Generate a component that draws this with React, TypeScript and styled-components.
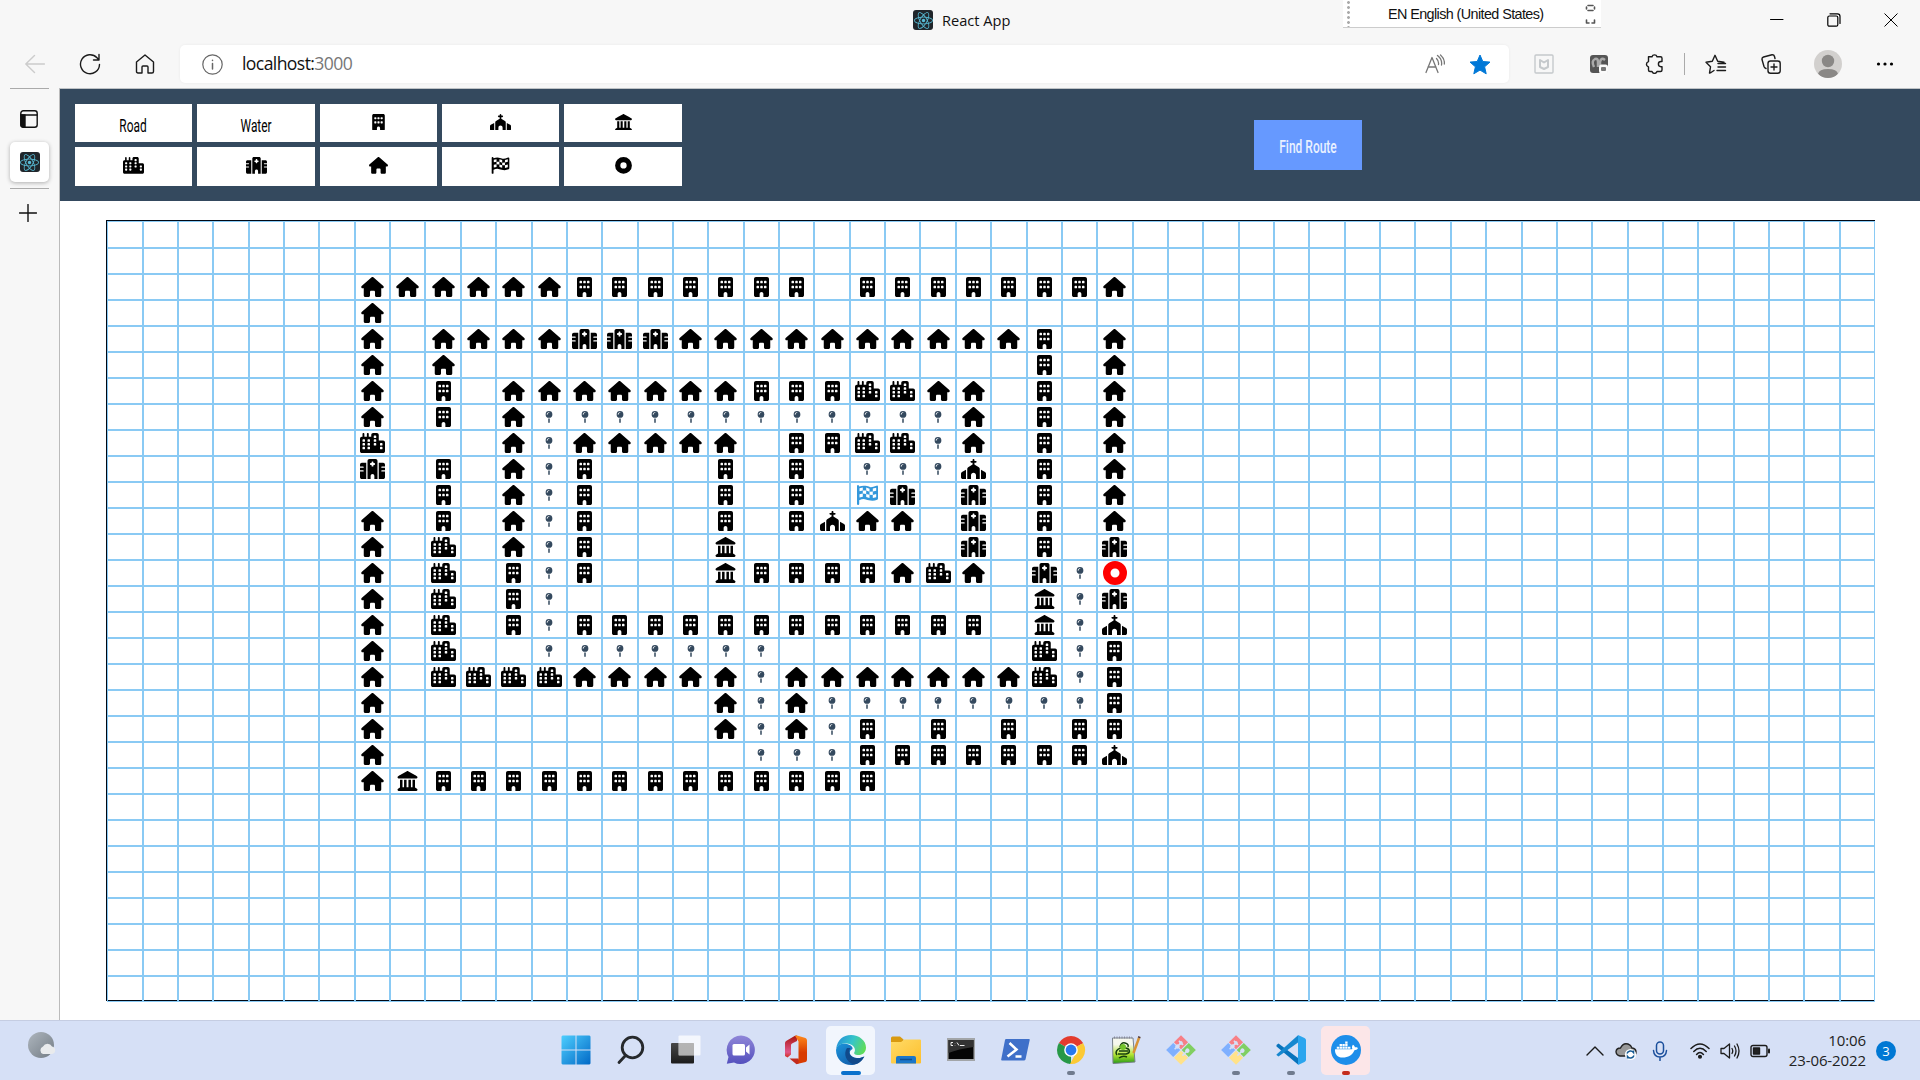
import React from "react";
import styled, { createGlobalStyle } from "styled-components";
import {
  FaBuilding, FaChurch, FaLandmark, FaCity, FaHospital, FaHouse,
  FaCircleDot, FaMapPin, FaReact, FaDocker,
} from "react-icons/fa6";

const Global = createGlobalStyle`
  * { box-sizing: border-box; }
  html, body { margin: 0; padding: 0; }
  body { background: #fff; font-family: "Open Sans", "Noto Sans", sans-serif; color: #1a1a1a; overflow: hidden; }
  svg { display: block; }
`;

const Screen = styled.div`
  width: 1920px;
  height: 1080px;
  display: flex;
  flex-direction: column;
  background: #f7f7f7;
`;

/* ---------- window chrome ---------- */
const TitleBar = styled.div`
  height: 45px;
  flex: none;
  display: flex;
  align-items: flex-start;
`;
const TabTitle = styled.div`
  margin-left: 913px;
  width: 430px;
  height: 40px;
  display: flex;
  align-items: center;
  gap: 9px;
  font-size: 14.6px;
  color: #111;
  white-space: nowrap;
`;
const LanguageBar = styled.div`
  width: 258px;
  height: 28px;
  background: #fff;
  border-bottom: 1px solid #ccc;
  display: flex;
  align-items: center;
  padding-left: 4px;
`;
const Grip = styled.div`
  width: 3px;
  height: 27px;
  background: radial-gradient(circle, #aaa 1.2px, transparent 1.6px) 0 0 / 3px 5px;
`;
const LanguageText = styled.div`
  margin-left: 38px;
  width: 185px;
  padding-top: 1px;
  font: 14.4px "Liberation Sans", Arial, sans-serif;
  letter-spacing: -0.6px;
  color: #111;
  white-space: nowrap;
`;
const WindowControls = styled.div`
  margin-left: 147px;
  height: 39px;
  display: flex;
  align-items: center;
`;
const ControlSlot = styled.div`
  width: 57px;
  display: flex;
  justify-content: center;
`;
const Favicon = styled.div`
  width: 20px;
  height: 20px;
  border-radius: 3px;
  background: #20262b;
  color: #58bcd6;
  display: flex;
  align-items: center;
  justify-content: center;
  font-size: 19px;
`;

const Toolbar = styled.div`
  height: 43px;
  flex: none;
  display: flex;
  align-items: flex-start;
`;
const NavSlots = styled.div`
  width: 180px;
  height: 38px;
  padding-left: 7px;
  display: flex;
  align-items: center;
`;
const Slot = styled.div<{ $w: number }>`
  width: ${(p) => p.$w}px;
  flex: none;
  display: flex;
  justify-content: center;
  align-items: center;
`;
const Address = styled.div`
  width: 1329px;
  height: 38px;
  flex: none;
  border-radius: 5px;
  background: #fff;
  box-shadow: 0 0 3px rgba(0, 0, 0, 0.06);
  display: flex;
  align-items: center;
  padding: 0 8px 0 22px;
`;
const Url = styled.div`
  flex: 1;
  margin-left: 19px;
  margin-top: -2px;
  font-size: 17.6px;
  letter-spacing: -0.6px;
  color: #111;
  span { color: #777; }
`;
const Extensions = styled.div`
  height: 38px;
  flex: 1;
  padding-left: 7px;
  display: flex;
  align-items: center;
`;
const Separator = styled.div`
  width: 1px;
  height: 22px;
  background: #aaa;
`;
const Avatar = styled.div`
  width: 28px;
  height: 28px;
  border-radius: 50%;
  overflow: hidden;
  background: #d2d0ce;
`;

const Body = styled.div`
  height: 932px;
  flex: none;
  display: flex;
`;
const SideTabs = styled.div`
  width: 59px;
  display: flex;
  flex-direction: column;
  align-items: center;
`;
const SideLine = styled.div`
  width: 39px;
  height: 1px;
  flex: none;
  background: #aaa;
`;
const TabsToggle = styled.div`
  height: 53px;
  display: flex;
  align-items: center;
  margin-right: 1px;
  padding-top: 7px;
`;
const ActiveTab = styled.div`
  width: 39px;
  height: 40px;
  margin-bottom: 6px;
  border-radius: 5px;
  background: #fff;
  box-shadow: 0 1px 4px rgba(0, 0, 0, 0.3);
  display: flex;
  align-items: center;
  justify-content: center;
`;
const NewTab = styled.div`
  margin: 15px 3px 0 0;
`;

/* ---------- the page ---------- */
const Page = styled.main`
  flex: 1;
  border-left: 1px solid #bbb;
  border-top: 1px solid #bfc3c6;
  background: #fff;
`;
const Header = styled.header`
  height: 112px;
  background: #34495e;
  display: flex;
  align-items: center;
  padding-left: 15px;
`;
const Palette = styled.div`
  display: grid;
  grid-template: 38px 39px / 117px 118px 117px 117px 118px;
  gap: 5px;
`;
const PaletteItem = styled.button`
  border: 0;
  padding: 0 0 2px;
  background: #fff;
  color: #000;
  display: flex;
  align-items: center;
  justify-content: center;
  svg { width: 21px; height: 16.8px; }
`;
const Narrow = styled.span<{ $bold?: boolean }>`
  font-family: Roboto, "Liberation Sans", sans-serif;
  font-size: 19.2px;
  font-weight: ${(p) => (p.$bold ? 500 : 400)};
  white-space: nowrap;
  transform: ${(p) => (p.$bold ? "translateY(1px) scaleX(0.625)" : "translateY(3px) scaleX(0.62)")};
`;
const RouteButton = styled.button`
  margin-left: 572px;
  width: 108px;
  height: 50px;
  border: 0;
  padding: 0;
  background: #6699ff;
  color: #e9f1ff;
  display: flex;
  align-items: center;
  justify-content: center;
`;
const Board = styled.div`
  margin: 19px 0 0 46px;
  width: 1769px;
  height: 781px;
  border: 1px solid #000814;
`;
const Cells = styled.div`
  width: 1768.5px;
  height: 781px;
  margin-left: 0.2px;
  display: grid;
  grid-template: 27px repeat(29, 26px) / repeat(50, 35.37px);
`;
const iconSize = { normal: [25, 20], pin: [12, 12], ring: [24, 24] } as const;
const Cell = styled.div<{ $tone: string; $kind: keyof typeof iconSize }>`
  border: 1px solid #8acaf4;
  color: ${(p) => p.$tone};
  display: flex;
  align-items: center;
  justify-content: center;
  svg {
    flex: none;
    width: ${(p) => iconSize[p.$kind][0]}px;
    height: ${(p) => iconSize[p.$kind][1]}px;
  }
`;

/* ---------- taskbar ---------- */
const Taskbar = styled.footer`
  height: 60px;
  flex: none;
  background: #d6e0f6;
  border-top: 1px solid #c5cde2;
  display: flex;
  align-items: center;
`;
const Weather = styled.div`
  width: 548px;
  padding: 0 0 12px 27px;
`;
const Pinned = styled.div`
  width: 1030px;
  display: flex;
`;
const PinnedApp = styled.div<{ $bg?: string; $bar?: string; $wide?: boolean }>`
  width: 49px;
  height: 49px;
  margin: 0 3px;
  border-radius: 5px;
  background: ${(p) => p.$bg ?? "transparent"};
  display: flex;
  flex-direction: column;
  align-items: center;
  justify-content: space-between;
  padding-top: 9px;
  &::after {
    content: "";
    width: ${(p) => (p.$wide ? 20 : 8)}px;
    height: 4px;
    border-radius: 2px;
    background: ${(p) => p.$bar ?? "transparent"};
  }
`;
const Tray = styled.div`
  display: flex;
  align-items: center;
`;
const Clock = styled.div`
  width: 86px;
  margin-top: -2px;
  text-align: right;
  font-size: 15px;
  line-height: 20px;
  letter-spacing: -0.1px;
  color: #222;
`;
const Badge = styled.div`
  width: 20px;
  height: 20px;
  margin-left: 10px;
  border-radius: 50%;
  background: #0078d4;
  color: #fff;
  font-size: 13px;
  line-height: 20px;
  text-align: center;
`;

const MAP = [
  "", "",
  "HHHHHHBBBBBBB.BBBBBBBH",
  "H",
  "H.HHHHSSSHHHHHHHHHHB.H",
  "H.H................B.H",
  "H.B.HHHHHHHBBBCCHH.B.H",
  "H.B.HppppppppppppH.B.H",
  "C...HpHHHHH.BBCCpH.B.H",
  "S.B.HpB...B.B.ppph.B.H",
  "..B.HpB...B.B.FS.S.B.H",
  "H.B.HpB...B.BhHH.S.B.H",
  "H.C.HpB...L......S.B.S",
  "H.C.BpB...LBBBBHCH.SpO",
  "H.C.Bp.............LpS",
  "H.C.BpBBBBBBBBBBBB.Lph",
  "H.C..ppppppp.......CpB",
  "H.CCCCHHHHHpHHHHHHHCpB",
  "H.........HpHppppppppB",
  "H.........HpHpB.B.B.BB",
  "H..........pppBBBBBBBh",
  "HLBBBBBBBBBBBBB",
];
const FIRST_COLUMN = 7;

const CheckeredFlag = () => (
  <svg viewBox="0 0 21 20" fill="currentColor">
    <path d="M1 0Q2.200 0 2.200 1.500Q5.500 .3 8.500 .8T13 2T19.500 .7Q21 .2 21 1.800V13.500Q21 14.300 20.200 14.700Q17 16 13.500 15.500T8 14.300T2.200 15.200V19Q2.200 20 1.100 20Q0 20 0 19V1.200Q0 0 1 0Z" />
    <g fill="#fff">
      <path d="M2.500 3.200L5.800 2.600V5.600L2.500 6.200Z" />
      <path d="M9.200 2.600L12.500 3.700V6.700L9.200 5.600Z" />
      <path d="M15.800 3.600L19.200 2.700V5.700L15.800 6.600Z" />
      <path d="M5.800 5.600L9.200 5.600V8.900L5.800 8.600Z" />
      <path d="M12.500 6.700L15.800 6.600V9.900L12.500 9.700Z" />
      <path d="M2.500 9.200L5.800 8.600V11.800L2.500 12.600Z" />
      <path d="M9.200 8.900L12.500 9.700V12.900L9.200 12Z" />
      <path d="M15.800 9.900L19.200 9V12.200L15.800 13.100Z" />
    </g>
  </svg>
);

const ICONS: Record<string, React.ComponentType> = {
  H: FaHouse, B: FaBuilding, C: FaCity, S: FaHospital, h: FaChurch,
  L: FaLandmark, p: FaMapPin, F: CheckeredFlag, O: FaCircleDot,
};
const TONES: Record<string, string> = { p: "#34495e", F: "#3498db", O: "#ff0000" };

const Grid = () => (
  <Board>
    <Cells>
      {Array.from({ length: 1500 }, (_, i) => {
        const code = MAP[Math.floor(i / 50)]?.[(i % 50) - FIRST_COLUMN] ?? ".";
        const Icon = ICONS[code];
        return (
          <Cell key={i} $tone={TONES[code] ?? "#000"} $kind={code === "p" ? "pin" : code === "O" ? "ring" : "normal"}>
            {Icon && <Icon />}
          </Cell>
        );
      })}
    </Cells>
  </Board>
);

type LineProps = { w?: number; h?: number; color?: string; sw?: number; children: React.ReactNode };
const Line = ({ w = 20, h = 20, color = "#1b1b1b", sw = 1.4, children }: LineProps) => (
  <svg width={w} height={h} viewBox={`0 0 ${w} ${h}`} fill="none" stroke={color} strokeWidth={sw} strokeLinecap="round" strokeLinejoin="round">
    {children}
  </svg>
);
const Art = ({ w = 30, h = 30, children }: { w?: number; h?: number; children: React.ReactNode }) => (
  <svg width={w} height={h} viewBox={`0 0 ${w} ${h}`}>{children}</svg>
);

const GitArt = () => (
  <Art>
    <g transform="translate(15 15) rotate(45)">
      <rect x="-10.5" y="-10.5" width="10" height="10" fill="#f77f86" />
      <rect x="-10.5" y="0.5" width="10" height="10" fill="#7fb0ff" />
      <rect x="0.5" y="-10.5" width="10" height="10" fill="#80cf62" />
      <rect x="0.5" y="0.5" width="10" height="10" fill="#ffe28a" />
      <path d="M-8 -5L-2 -5M-5 -5V4M5 -6V3" stroke="#d6e0f6" strokeWidth="1.6" />
      <circle cx="-5" cy="-5" r="1.8" fill="#d6e0f6" />
      <circle cx="-5" cy="0" r="2.2" fill="#d6e0f6" />
      <circle cx="5" cy="-4" r="2.2" fill="#d6e0f6" />
    </g>
  </Art>
);

const TaskApps = () => (
  <Pinned>
    <PinnedApp>
      <Art>
        <defs>
          <linearGradient id="win" x1="0" y1="0" x2="30" y2="30" gradientUnits="userSpaceOnUse">
            <stop stopColor="#4fd0ff" /><stop offset="1" stopColor="#0067c5" />
          </linearGradient>
        </defs>
        <path fill="url(#win)" d="M1.500 .5H14.500V14.500H.5V1.500Zm14 0H28.500l1 1V14.500H15.500ZM.5 15.500h14v14H1.500l-1-1Zm15 0h14v13l-1 1h-13Z" />
      </Art>
    </PinnedApp>
    <PinnedApp>
      <Line w={30} h={30} color="#26292c" sw={2.8}>
        <circle cx="16.5" cy="12.5" r="10.3" /><path d="M9.500 20.500L3 27.500" />
      </Line>
    </PinnedApp>
    <PinnedApp>
      <Art>
        <defs><linearGradient id="tv" x1="0" y1="0" x2="0" y2="1"><stop stopColor="#474747" /><stop offset="1" stopColor="#1c1c1c" /></linearGradient></defs>
        <rect x="0" y="8" width="23" height="20.5" rx="1" fill="url(#tv)" />
        <rect x="7.5" y=".5" width="22" height="20" rx="1" fill="#fff" opacity=".72" />
        <rect x="7.5" y="8" width="15.5" height="12.5" fill="#999" opacity=".45" />
      </Art>
    </PinnedApp>
    <PinnedApp>
      <Art>
        <defs><linearGradient id="chat" x1="0" y1="0" x2="0" y2="1"><stop stopColor="#8f86d8" /><stop offset="1" stopColor="#5450bd" /></linearGradient></defs>
        <path fill="url(#chat)" d="M15 .5a14.300 14.300 0 1 1-7 27L.8 28.800 2.500 22A14.400 14.400 0 0 1 15 .5Z" />
        <rect x="6.500" y="9" width="12.500" height="11.500" rx="1.500" fill="#fff" /><path fill="#fff" d="M20 12.500L23.500 9.500V19.500L20 16.500Z" />
      </Art>
    </PinnedApp>
    <PinnedApp>
      <Art>
        <defs>
          <linearGradient id="off" x1="0" y1="0" x2="0" y2="1"><stop stopColor="#a9140d" /><stop offset=".75" stopColor="#e0578a" /><stop offset="1" stopColor="#d03020" /></linearGradient>
          <linearGradient id="off2" x1="0" y1="0" x2="0" y2="1"><stop stopColor="#ff8a1c" /><stop offset=".6" stopColor="#d83b01" /></linearGradient>
        </defs>
        <path fill="url(#off)" d="M4 8Q4 6.500 5.500 5.700L14 .8L16 .5V6L11 8.500Q10 9 10 10V19.500L6.500 22.500L4 21Z" />
        <path fill="url(#off2)" d="M14 .8L16 .5L24.500 3Q26 3.500 26 5.500V24.500Q26 26.500 24.500 27L16 29L17.500 23.500V6.500Z" />
        <path fill="#c22a1d" d="M8.500 23.500H17.500V28.500L15.500 29.300Z" />
      </Art>
    </PinnedApp>
    <PinnedApp $bg="#f2f6fd" $bar="#0a70cc" $wide>
      <Art>
        <defs>
          <linearGradient id="eg" x1="0" y1=".3" x2="1" y2=".6"><stop stopColor="#2492d8" /><stop offset=".5" stopColor="#35c4ca" /><stop offset="1" stopColor="#61dd55" /></linearGradient>
          <linearGradient id="eb" x1="0" y1="0" x2="1" y2="1"><stop stopColor="#1c95dc" /><stop offset="1" stopColor="#0f4e9c" /></linearGradient>
        </defs>
        <path fill="url(#eb)" d="M0 15C1 9 6 8 11 9C15 10 17 12 16.500 14C12 16 13 22 21 23C24 23.500 26 22 28 21.500C25 28 20 30 15 30C7 30 0 24 0 15Z" />
        <path fill="#114a8b" d="M11 13C7 19 10 27 18 29.500C23 28.500 26 26 28.500 21.500C22 25 15 23 13.500 18.500C13 17 13.200 15 14.500 13Z" />
        <path fill="url(#eg)" d="M.2 13.500C1.500 5 7 0 15 0C23 0 30 5.500 30 12.500C30 17.500 26.500 20 22.500 20C18.500 20 17.500 18.500 18.500 17C20 14.500 18 9 11 8.500C6 8 2 10 .2 13.500Z" />
      </Art>
    </PinnedApp>
    <PinnedApp>
      <Art>
        <defs><linearGradient id="fo" x1="0" y1="0" x2="1" y2="1"><stop stopColor="#ffdb67" /><stop offset="1" stopColor="#fdbf2d" /></linearGradient></defs>
        <path fill="#d99a10" d="M0 3Q0 1.500 1.500 1.500H9L12.500 4.500V10H0Z" />
        <path fill="url(#fo)" d="M0 7H10L13.500 4.500H29Q30 4.500 30 5.500V27.500Q30 28.500 29 28.500H1Q0 28.500 0 27.500Z" />
        <path fill="#1b77c9" d="M5 28.500V23Q5 21 7 21H23Q25 21 25 23V28.500Z" /><path d="M9 24.500H21" stroke="#0c4f91" strokeWidth="1.5" />
      </Art>
    </PinnedApp>
    <PinnedApp>
      <Art>
        <rect x="1" y="3" width="28" height="23" fill="#a2a5a8" /><rect x="2.500" y="5" width="25" height="19" fill="#050505" />
        <path fill="#333" d="M2.500 5H27.500V12Q12 14 2.500 18Z" />
        <path d="M5 7.500H7M5 7.500V10.500H7M9 8V8.300M9 10.200V10.500M11 7.500L13 10.500M14 10.500H18.500" stroke="#eee" strokeWidth="1" fill="none" />
      </Art>
    </PinnedApp>
    <PinnedApp>
      <Art>
        <path fill="#3f70c9" d="M5 4H28Q29 4 28.700 5L24.500 24.500Q24 25.500 23 25.500H1Q0 25.500 .2 24.500L4 5Q4.300 4 5 4Z" />
        <path d="M8.500 8L15.500 14.500 6.500 21.500M14.500 21.500H20.500" stroke="#fff" strokeWidth="2.500" fill="none" />
      </Art>
    </PinnedApp>
    <PinnedApp $bar="#707b8e">
      <Art>
        <path fill="#e33b2e" d="M15 15L2.900 8A14 14 0 0 1 27.100 8Z" />
        <path fill="#279847" d="M15 15V29A14 14 0 0 1 2.900 8Z" />
        <path fill="#fcc934" d="M15 15L27.100 8A14 14 0 0 1 14 29L20 18Z" />
        <path fill="#e33b2e" d="M15 8H27.100L24 9Z" />
        <path fill="#279847" d="M2.900 8L9 18 15 21.500 13.500 29Z" />
        <circle cx="15" cy="15" r="6.800" fill="#fff" /><circle cx="15" cy="15" r="5.400" fill="#2a78ee" />
      </Art>
    </PinnedApp>
    <PinnedApp>
      <Art>
        <defs><linearGradient id="npp" x1="0" y1="0" x2="0" y2="1"><stop offset=".25" stopColor="#f6f8ee" /><stop offset=".65" stopColor="#b4e532" /><stop offset="1" stopColor="#259917" /></linearGradient></defs>
        <path fill="url(#npp)" stroke="#78818a" d="M1.500 3H22L24 27L2 28.500Z" /><path d="M3 2.500H21" stroke="#889" strokeWidth="2" strokeDasharray="1 1.500" />
        <path d="M6 20C3 16 9 11 15 13C19 14 20 18 15 19H7M9 12Q10 7 14 8T17 12M8 23Q12 20 16 22M8 16H17" fill="none" stroke="#17400f" strokeWidth="1.500" /><circle cx="12" cy="12" r="3" fill="#72c32a" />
        <path d="M28 3L22.500 18" stroke="#d89333" strokeWidth="2.500" /><path d="M28 3L28.500 1.500" stroke="#583b33" strokeWidth="2.500" />
      </Art>
    </PinnedApp>
    <PinnedApp><GitArt /></PinnedApp>
    <PinnedApp $bar="#707b8e"><GitArt /></PinnedApp>
    <PinnedApp $bar="#707b8e">
      <Art>
        <path fill="#0873bc" d="M.5 10L2.500 8.500L22 23V29.500L.5 11.500Z" />
        <path fill="#1687cf" d="M.5 19.500L22 .3V7.500L2.500 21.500L.5 20Z" />
        <path fill="#2ba5ee" d="M22 0L28.500 3Q30 3.800 30 5V25Q30 26.200 28.500 27L22 30Z" />
      </Art>
    </PinnedApp>
    <PinnedApp $bg="#fce6e8" $bar="#c42b1c">
      <Art>
        <circle cx="15" cy="15" r="15" fill="#1d8eea" />
        <g transform="translate(4 3)" color="#fff"><FaDocker size={23} /></g>
      </Art>
    </PinnedApp>
  </Pinned>
);

export default function App() {
  return (
    <Screen>
      <Global />
      <TitleBar>
        <TabTitle><Favicon><FaReact /></Favicon>React App</TabTitle>
        <LanguageBar>
          <Grip />
          <LanguageText>EN English (United States)</LanguageText>
          <Line w={26} h={24} color="#555" sw={1.6}><path d="M15 3.500H20M15 8.500H20M13.500 5V7M21.500 5V7M13.500 18V21H16M21.500 18V21H19" /></Line>
        </LanguageBar>
        <WindowControls>
          <ControlSlot><Line w={14} h={14} sw={1} color="#000"><path d="M.5 6.500H13" /></Line></ControlSlot>
          <ControlSlot><Line w={14} h={14} sw={1.200} color="#000"><rect x=".8" y="3" width="10" height="10.200" rx="1.500" /><path d="M3 .8H10.500Q13 .8 13 3.500V10.500" /></Line></ControlSlot>
          <ControlSlot><Line w={14} h={14} sw={1} color="#000"><path d="M.8 .8L13.200 13.200M13.200 .8L.8 13.200" /></Line></ControlSlot>
        </WindowControls>
      </TitleBar>

      <Toolbar>
        <NavSlots>
          <Slot $w={55}><Line color="#ccc"><path d="M19.500 10H.8M9.500 1.500L.8 10 9.500 18.500" /></Line></Slot>
          <Slot $w={56}><Line w={22} h={22}><path d="M20.500 11.500A9.500 9.500 0 1 1 18 4.800L20 7M20 1.500V7H14.500" /></Line></Slot>
          <Slot $w={54}><Line><path d="M1.500 8L10 1 18.500 8V17.500Q18.500 19 17 19H13V13Q13 12 12 12H8Q7 12 7 13V19H3Q1.500 19 1.500 17.500Z" /></Line></Slot>
        </NavSlots>
        <Address>
          <Line w={21} h={21} color="#666" sw={1.200}><circle cx="10.500" cy="10.500" r="9.700" /><path d="M10.500 9.500V15M10.500 6.200V6.400" strokeWidth={1.500} /></Line>
          <Url>localhost:<span>3000</span></Url>
          <Slot $w={46}>
            <Line color="#777" sw={1.300}><path d="M1 18.500L7 3.500 13 18.500M3 13H11M11.500 4.500Q14 7 13.500 10.500M12.500 1.500Q17.500 5.500 16.500 11M15.500 1Q20 5 19.300 10" /></Line>
          </Slot>
          <Slot $w={43}>
            <Art w={22} h={21}><path fill="#0078d7" stroke="#0078d7" strokeLinejoin="round" d="M11 1L13.800 7.500 21 8.100 15.600 12.800 17.200 19.800 11 16.100 4.800 19.800 6.400 12.800 1 8.100 8.200 7.500Z" /></Art>
          </Slot>
        </Address>
        <Extensions>
          <Slot $w={56}><Line color="#c5c9cc"><rect x="1" y="1" width="18" height="18" rx="1" /><path d="M6 6L10 8.500 14 6V13L10 15 6 13Z" strokeWidth={2} /></Line></Slot>
          <Slot $w={54}>
            <Art w={20} h={20}><rect x="1" y="1" width="18" height="18" rx="3" fill="#555" /><path d="M5 13Q2 7 6 5Q9 4 9 8V13M16 6Q12 3 11 8V12" fill="none" stroke="#aaa" strokeWidth="2.500" /><rect x="10" y="10.500" width="9" height="9" rx="2.500" fill="#fafafa" /><rect x="12" y="13" width="5" height="4" rx="1" fill="#777" /></Art>
          </Slot>
          <Slot $w={56}>
            <Line><path d="M4.500 2.800H8A2.600 2.600 0 0 1 13 2.800H16.500Q18 2.800 18 4.300V7.500H17A2.600 2.600 0 0 0 17 12.700H18V16Q18 17.500 16.500 17.500H13A2.600 2.600 0 0 1 8 17.500H6Q4.500 17.500 4.500 16V13A2.800 2.800 0 0 1 4.500 7.600Z" /></Line>
          </Slot>
          <Slot $w={5}><Separator /></Slot>
          <Slot $w={57}>
            <Line w={22} h={20}><path d="M6 18.500L4.500 19 5.500 12.800 1 8.300 7.300 7.300 10 1.300 12.700 7.300 19 8.300M13 9.500H20.500M13 13H20.500M12 16.500H20.500M6 18.500L9 16.500" /></Line>
          </Slot>
          <Slot $w={54}>
            <Line><rect x="7" y="7" width="12.200" height="12.200" rx="2.500" /><path d="M13 10V16M10 13H16M5 14.500Q3.500 14 3 12.500L1 5.500Q.7 3.500 2.500 3L11 .8Q13 .6 13.500 2.500L14 4.500" /></Line>
          </Slot>
          <Slot $w={60}>
            <Avatar><Art w={28} h={28}><circle cx="14" cy="11" r="6.200" fill="#8a8886" /><path fill="#8a8886" d="M4 24Q5 19 14 19T24 24L20 28H8Z" /></Art></Avatar>
          </Slot>
          <Slot $w={54}>
            <Art w={18} h={4}><circle cx="2.500" cy="2" r="1.600" /><circle cx="9" cy="2" r="1.600" /><circle cx="15.500" cy="2" r="1.600" /></Art>
          </Slot>
        </Extensions>
      </Toolbar>

      <Body>
        <SideTabs>
          <SideLine />
          <TabsToggle>
            <Line w={18} h={18} color="#111"><rect x=".8" y=".8" width="16.400" height="16.400" rx="2.500" /><path d="M1 5H17" /><path fill="#111" d="M1 5H5V17H3Q1 17 1 15Z" /></Line>
          </TabsToggle>
          <ActiveTab><Favicon><FaReact /></Favicon></ActiveTab>
          <SideLine />
          <NewTab><Line w={18} h={18} color="#111"><path d="M9 .5V17.500M.5 9H17.500" /></Line></NewTab>
        </SideTabs>
        <Page>
          <Header>
            <Palette>
              <PaletteItem><Narrow>Road</Narrow></PaletteItem>
              <PaletteItem><Narrow>Water</Narrow></PaletteItem>
              <PaletteItem><FaBuilding /></PaletteItem>
              <PaletteItem><FaChurch /></PaletteItem>
              <PaletteItem><FaLandmark /></PaletteItem>
              <PaletteItem><FaCity /></PaletteItem>
              <PaletteItem><FaHospital /></PaletteItem>
              <PaletteItem><FaHouse /></PaletteItem>
              <PaletteItem><CheckeredFlag /></PaletteItem>
              <PaletteItem><FaCircleDot /></PaletteItem>
            </Palette>
            <RouteButton><Narrow $bold>Find Route</Narrow></RouteButton>
          </Header>
          <Grid />
        </Page>
      </Body>

      <Taskbar>
        <Weather>
          <Art w={29} h={28}>
            <defs><linearGradient id="moon" x1="0" y1="0" x2="1" y2="1"><stop stopColor="#aeb6be" /><stop offset="1" stopColor="#737c85" /></linearGradient></defs>
            <circle cx="14" cy="14" r="13" fill="url(#moon)" />
            <path fill="#e9ebed" d="M16 23A4 4 0 0 1 16 15.500A5 5 0 0 1 25 15.500A3.800 3.800 0 0 1 25 23Z" />
          </Art>
        </Weather>
        <TaskApps />
        <Tray>
          <Slot $w={34}><Line w={18} h={10}><path d="M1 9L9 1 17 9" /></Line></Slot>
          <Slot $w={27}>
            <Art w={22} h={20}>
              <path fill="#999" stroke="#222" strokeWidth="1.400" d="M5 15Q1 14 1 10.500Q1.500 7 5.500 7Q8 1.500 13 3Q16 4 17 7Q21 7.500 21 11Q21 15 17 15Z" />
              <circle cx="15.500" cy="13.500" r="5.600" fill="#fff" /><path d="M12 12.500A3.700 3.700 0 0 1 18.500 11.500V9.500M19 14.500A3.700 3.700 0 0 1 12.500 15.500V17.500" stroke="#155a94" strokeWidth="1.500" fill="none" />
            </Art>
          </Slot>
          <Slot $w={41}><Line w={16} h={20} color="#1b4f9c" sw={1.500}><rect x="4.500" y="1" width="7" height="12" rx="3.500" /><path d="M1.500 9.500Q2 16 8 16T14.500 9.500M8 16V19.500" /></Line></Slot>
          <Slot $w={40}><Line w={20} h={16} sw={1.500}><path d="M1 5.500Q10 -3.500 19 5.500M3.800 8.500Q10 2 16.200 8.500M6.600 11.500Q10 7.500 13.400 11.500" /><circle cx="10" cy="13.800" r="1.300" fill="#222" /></Line></Slot>
          <Slot $w={20}><Line w={20} h={18} sw={1.300}><path d="M1 6.500H4L9.500 2V16L4 11.500H1ZM12 6.500Q13.500 9 12 11.500M14.500 4Q17.500 9 14.500 14M17 2Q21 9 17 16" /></Line></Slot>
          <Slot $w={40}><Line w={20} h={14} sw={1.400}><rect x="1" y="1.500" width="16" height="11" rx="2" /><rect x="3.500" y="4" width="6" height="6" fill="#222" /><path d="M19 5.500V8.500" strokeWidth="2" /></Line></Slot>
          <Clock>10:06<br />23-06-2022</Clock>
          <Badge>3</Badge>
        </Tray>
      </Taskbar>
    </Screen>
  );
}
